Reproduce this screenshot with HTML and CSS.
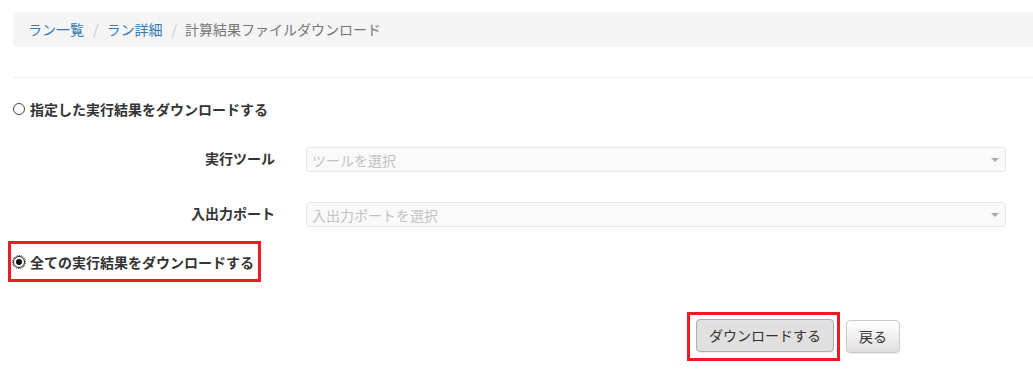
FILE: index.html
```html
<!doctype html>
<html>
<head>
<meta charset="utf-8">
<title>計算結果ファイルダウンロード</title>
<link rel="stylesheet" href="styles.css">
</head>
<body>
<div class="page">
	<ol class="breadcrumb">
		<li><a href="#">ラン一覧</a></li>
		<li><a href="#">ラン詳細</a></li>
		<li class="active">計算結果ファイルダウンロード</li>
	</ol>

	<hr class="divider">

	<div class="radio-row">
		<span class="radio"></span>
		<span class="radio-label">指定した実行結果をダウンロードする</span>
	</div>

	<div class="form-row first">
		<label class="form-label">実行ツール</label>
		<div class="select">
			<span class="placeholder">ツールを選択</span>
			<span class="caret"></span>
		</div>
	</div>

	<div class="form-row">
		<label class="form-label">入出力ポート</label>
		<div class="select">
			<span class="placeholder">入出力ポートを選択</span>
			<span class="caret"></span>
		</div>
	</div>

	<div class="highlight radio-box">
		<div class="radio-row">
			<span class="radio checked"></span>
			<span class="radio-label">全ての実行結果をダウンロードする</span>
		</div>
	</div>

	<div class="actions">
		<div class="highlight btn-box">
			<span class="btn btn-active">ダウンロードする</span>
		</div>
		<span class="btn">戻る</span>
	</div>
</div>
</body>
</html>
```

FILE: styles.css
```css
* {
	margin: 0;
	padding: 0;
	box-sizing: border-box;
}

body {
	background: #fff;
	font-family: "Noto Sans CJK JP", "Noto Sans", sans-serif;
	font-size: 14px;
	color: #333;
}

.page {
	padding: 12px 0 0 13px;
}

.breadcrumb {
	list-style: none;
	display: flex;
	height: 35px;
	line-height: 35px;
	padding: 0 15px;
	background: #f5f5f5;
	border-radius: 4px 0 0 4px;
}

.breadcrumb li + li:before {
	content: "/";
	color: #ccc;
	padding: 0 8px 0 9px;
}

.breadcrumb a {
	color: #337ab7;
	text-decoration: none;
}

.breadcrumb .active {
	color: #777;
}

.divider {
	border: 0;
	border-top: 1px solid #eee;
	margin-top: 30px;
}

.radio-row {
	display: flex;
	align-items: center;
	height: 20px;
	line-height: 20px;
	margin-top: 21px;
}

.radio {
	width: 12px;
	height: 12px;
	border: 1px solid #444;
	border-radius: 50%;
	margin-right: 5px;
	position: relative;
	flex-shrink: 0;
}

.radio.checked:after {
	content: "";
	position: absolute;
	left: 2px;
	top: 2px;
	width: 6px;
	height: 6px;
	border-radius: 50%;
	background: #111;
}

.radio.checked {
	outline: 1px dotted #333;
	outline-offset: 0;
	border-color: #222;
}

.radio-label {
	font-weight: bold;
	color: #333;
}

.form-row {
	display: flex;
	align-items: flex-start;
	margin-top: 30px;
}

.form-row.first {
	margin-top: 28px;
}

.form-label {
	width: 262px;
	text-align: right;
	font-weight: bold;
	line-height: 20px;
	padding-top: 1px;
	margin-right: 31px;
}

.select {
	width: 700px;
	height: 25px;
	display: flex;
	align-items: center;
	justify-content: space-between;
	padding: 0 5px 0 5px;
	background: #fafafa;
	border: 1px solid #e6e6e6;
	border-radius: 3px;
}

.placeholder {
	color: #c2c2c2;
	line-height: 20px;
}

.caret {
	width: 0;
	height: 0;
	border-left: 4px solid transparent;
	border-right: 4px solid transparent;
	border-top: 4px solid #aaa;
	margin-right: 1px;
}

.highlight {
	border: 3px solid #ed1c24;
}

.radio-box {
	display: inline-block;
	margin: 14px 0 0 -5px;
	padding: 8px 4px 7px 2px;
}

.radio-box .radio-row {
	margin-top: 0;
}

.actions {
	display: flex;
	align-items: center;
	margin: 30px 0 0 674px;
}

.btn-box {
	padding: 4px 3px 6px 6px;
	margin-right: 6px;
}

.btn {
	display: inline-block;
	height: 33px;
	line-height: 31px;
	padding: 0 12px;
	border: 1px solid #ccc;
	border-radius: 4px;
	background: linear-gradient(#fff, #e0e0e0);
	color: #333;
	cursor: pointer;
	box-shadow: inset 0 1px 0 rgba(255, 255, 255, 0.15), 0 1px 1px rgba(0, 0, 0, 0.075);
}

.btn-active {
	background: #e0e0e0;
	border-color: #adadad;
}
```
